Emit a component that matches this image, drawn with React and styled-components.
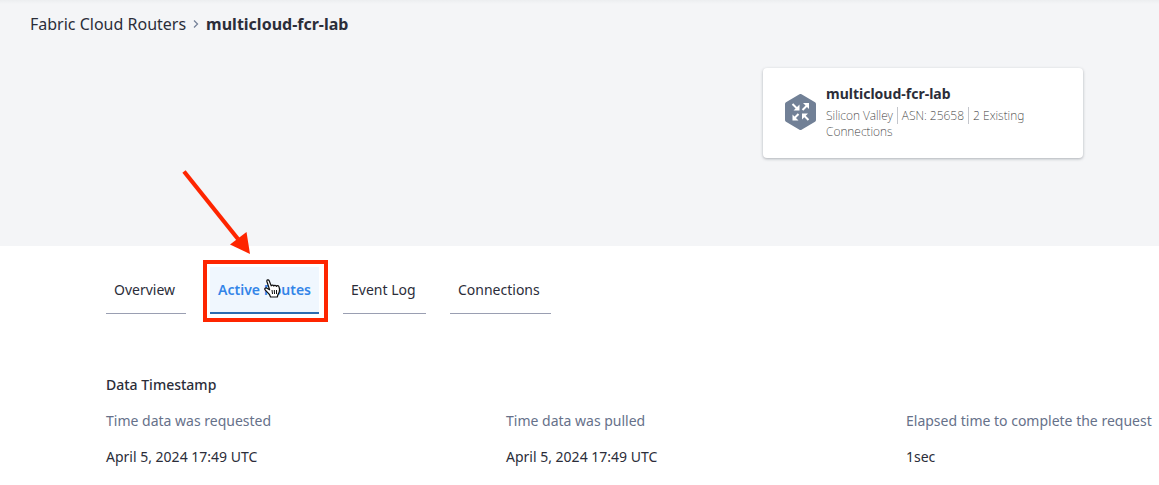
import React from "react";
import styled, { createGlobalStyle } from "styled-components";

const GlobalStyle = createGlobalStyle`
  *, *::before, *::after { box-sizing: border-box; }
  body {
    margin: 0;
    background: #fff;
    color: #2b2d39;
    font-family: "Noto Sans", "Open Sans", sans-serif;
    font-size: 14px;
    line-height: 20px;
  }
`;

const Page = styled.div`
  overflow-x: hidden;
`;

const Hero = styled.header`
  background: linear-gradient(#eceef0, #f4f5f7 4px);
  padding: 12px 76px 88px 30px;
`;

const Breadcrumb = styled.nav`
  display: flex;
  align-items: center;
  gap: 6px;
  font-size: 16px;
  line-height: 24px;
`;

const CrumbLink = styled.a`
  color: inherit;
  text-decoration: none;
`;

const Current = styled.span`
  font-weight: 700;
`;

const Card = styled.section`
  display: flex;
  align-items: center;
  gap: 9px;
  width: 320px;
  margin: 32px 0 0 auto;
  padding: 16px 22px 18px;
  background: #fff;
  border-radius: 4px;
  box-shadow: 0 1px 3px rgba(40, 50, 60, 0.35);
`;

const RouterIcon = styled.svg`
  flex: none;
  width: 32px;
  height: 36px;
`;

const CardTitle = styled.h2`
  margin: 0;
  font-size: 14px;
  line-height: 20px;
  font-weight: 700;
`;

const CardMeta = styled.p`
  margin: 4px 0 0;
  color: #333;
  font-size: 12px;
  line-height: 16px;
  font-weight: 200;
`;

const MetaItem = styled.span`
  & + & {
    margin-left: 4px;
    padding-left: 4px;
    border-left: 1px solid #c4c6cc;
  }
`;

const Main = styled.main`
  padding: 21px 0 16px 106px;
`;

const Tabs = styled.div`
  display: flex;
  gap: 24px;
`;

const TabSlot = styled.div`
  position: relative;
`;

const Tab = styled.button`
  display: block;
  height: 47px;
  padding: 0 8px;
  border: 0;
  border-bottom: ${(p) => (p.$active ? "2px solid #2b6cb0" : "1px solid #9a9fb2")};
  background: ${(p) => (p.$active ? "#f0f7fe" : "transparent")};
  color: ${(p) => (p.$active ? "#3385e8" : "inherit")};
  font: inherit;
  font-weight: ${(p) => (p.$active ? 600 : 400)};
  text-align: left;
  cursor: pointer;

  /* reserves the bold width so tabs keep their size when selected */
  &::after {
    content: attr(data-label);
    display: block;
    height: 0;
    overflow: hidden;
    visibility: hidden;
    font-weight: 600;
  }
`;

const Highlight = styled.div`
  position: absolute;
  inset: -7px -9px -8px -7px;
  border: 4px solid #fe2500;
  pointer-events: none;
`;

const Arrow = styled.svg`
  position: absolute;
  left: -30px;
  top: -99px;
  width: 74px;
  height: 88px;
  pointer-events: none;
`;

const Pointer = styled.svg`
  position: absolute;
  left: 54px;
  top: 12px;
  width: 17px;
  height: 19px;
  pointer-events: none;
`;

const SectionTitle = styled.h3`
  margin: 61px 0 16px;
  font-size: 14px;
  line-height: 20px;
  font-weight: 500;
`;

const Facts = styled.dl`
  display: grid;
  grid-template-columns: minmax(0, 400px) minmax(0, 400px) minmax(max-content, 1fr);
  margin: 0;
`;

const Label = styled.dt`
  color: #66718a;
`;

const Value = styled.dd`
  margin: 16px 0 0;
`;

const tabs = ["Overview", "Active Routes", "Event Log", "Connections"];
const active = "Active Routes";

const facts = [
  ["Time data was requested", "April 5, 2024 17:49 UTC"],
  ["Time data was pulled", "April 5, 2024 17:49 UTC"],
  ["Elapsed time to complete the request", "1sec"],
];

export default function App() {
  return (
    <Page>
      <GlobalStyle />
      <Hero>
        <Breadcrumb aria-label="Breadcrumb">
          <CrumbLink href="#routers">Fabric Cloud Routers</CrumbLink>
          <svg width="8" height="10" viewBox="0 0 8 10" fill="none" stroke="#76839a" strokeWidth="1.3" aria-hidden="true">
            <path d="M2 1.5 5.5 5 2 8.5" />
          </svg>
          <Current aria-current="page">multicloud-fcr-lab</Current>
        </Breadcrumb>
        <Card>
          <RouterIcon viewBox="0 0 32 36" aria-hidden="true">
            <path
              d="M15.500 2 29 10v16L15.500 34 2 26V10Z"
              fill="#718096"
              stroke="#718096"
              strokeWidth="4"
              strokeLinejoin="round"
            />
            <path d="M7.500 10 12.500 15M17.500 16 22.500 11M13.500 20 9 24.500M23.500 26 18.500 21" fill="none" stroke="#fff" strokeWidth="2" />
            <path d="M14.500 10.500v6h-6ZM18 9h6v6ZM7.500 20.500v6h6ZM17 19.500h6l-6 6Z" fill="#fff" />
          </RouterIcon>
          <div>
            <CardTitle>multicloud-fcr-lab</CardTitle>
            <CardMeta>
              <MetaItem>Silicon Valley</MetaItem>
              <MetaItem>ASN: 25658</MetaItem>
              <MetaItem>2 Existing Connections</MetaItem>
            </CardMeta>
          </div>
        </Card>
      </Hero>
      <Main>
        <Tabs role="tablist">
          {tabs.map((name) => (
            <TabSlot key={name} role="presentation">
              <Tab type="button" role="tab" aria-selected={name === active} data-label={name} $active={name === active}>
                {name}
              </Tab>
              {name === active && (
                <>
                  <Highlight />
                  <Arrow viewBox="0 0 74 88" aria-hidden="true">
                    <path d="M4 3.500 58 71" stroke="#fe2500" strokeWidth="4.200" />
                    <path d="M70 86 50 76.500 66.500 64Z" fill="#fe2500" />
                  </Arrow>
                  <Pointer viewBox="0 0 17 19" aria-hidden="true">
                    <path
                      d="M5.600 10.800 3.400 9.400C1.600 8.300 0 9.600 1.300 11.200L5.500 15.500 6.500 18h6.800l.7-2.500c1.300-1.600 1.700-3 1.500-5.500L15 7.800c-.3-1.500-2.300-1.300-2.500-.3-.4-1.500-2.500-1.500-2.700-.4-.5-1.400-2.300-1.300-2.600-.2L5.200 1.800C4.500.2 2.500.8 2.900 2.500Z"
                      fill="#fff"
                      stroke="#111"
                      strokeWidth="1.200"
                      strokeLinejoin="round"
                    />
                    <path d="M8 11l.5 4M10.300 11l.2 4M12.500 11v4" stroke="#111" />
                  </Pointer>
                </>
              )}
            </TabSlot>
          ))}
        </Tabs>
        <SectionTitle>Data Timestamp</SectionTitle>
        <Facts>
          {facts.map(([label, value]) => (
            <div key={label}>
              <Label>{label}</Label>
              <Value>{value}</Value>
            </div>
          ))}
        </Facts>
      </Main>
    </Page>
  );
}
